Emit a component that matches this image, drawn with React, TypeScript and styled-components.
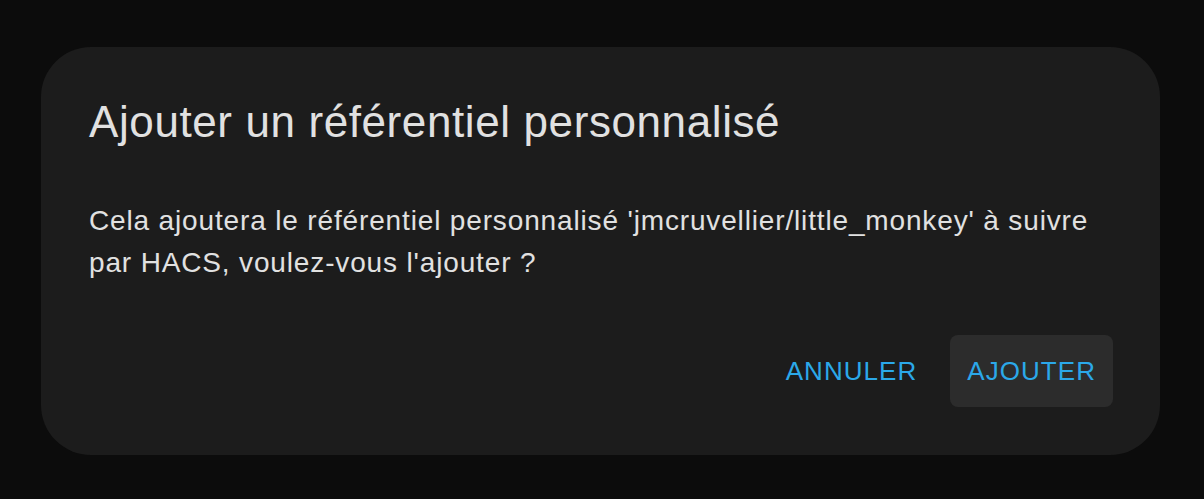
import styled, { createGlobalStyle } from "styled-components";

const GlobalStyle = createGlobalStyle`
  html, body {
    margin: 0;
    padding: 0;
    background: #0c0c0c;
  }
  body {
    font-family: "Liberation Sans", Arial, sans-serif;
  }
`;

const Page = styled.div`
  width: 1204px;
  height: 499px;
  box-sizing: border-box;
  padding: 47px 44px 44px 41px;
  background: #0c0c0c;
`;

const Dialog = styled.div`
  box-sizing: border-box;
  width: 1119px;
  height: 408px;
  background: #1c1c1c;
  border-radius: 50px;
  padding: 49px 47px 48px 48px;
  display: flex;
  flex-direction: column;
`;

const Title = styled.h2`
  margin: 0;
  font-size: 44px;
  line-height: 52px;
  font-weight: 400;
  letter-spacing: 0.6px;
  color: #e1e1e1;
`;

const Body = styled.p`
  margin: 52px 0 0;
  font-size: 28px;
  line-height: 42px;
  letter-spacing: 0.85px;
  color: #e1e1e1;
`;

const Actions = styled.div`
  margin-top: auto;
  display: flex;
  justify-content: flex-end;
  gap: 16px;
`;

const Button = styled.button<{ $focused?: boolean }>`
  height: 72px;
  padding: 0 17px;
  border: none;
  border-radius: 8px;
  background: ${(p) => (p.$focused ? "#2c2c2c" : "transparent")};
  color: #2ba8e9;
  font-family: "Liberation Sans", Arial, sans-serif;
  font-size: 26px;
  letter-spacing: 1.05px;
  text-transform: uppercase;
  display: flex;
  align-items: center;
  cursor: pointer;
`;

export default function App() {
  return (
    <>
      <GlobalStyle />
      <Page>
        <Dialog>
          <Title>Ajouter un référentiel personnalisé</Title>
          <Body>
            Cela ajoutera le référentiel personnalisé 'jmcruvellier/little_monkey' à suivre
            <br />
            par HACS, voulez-vous l'ajouter ?
          </Body>
          <Actions>
            <Button>Annuler</Button>
            <Button $focused>Ajouter</Button>
          </Actions>
        </Dialog>
      </Page>
    </>
  );
}
